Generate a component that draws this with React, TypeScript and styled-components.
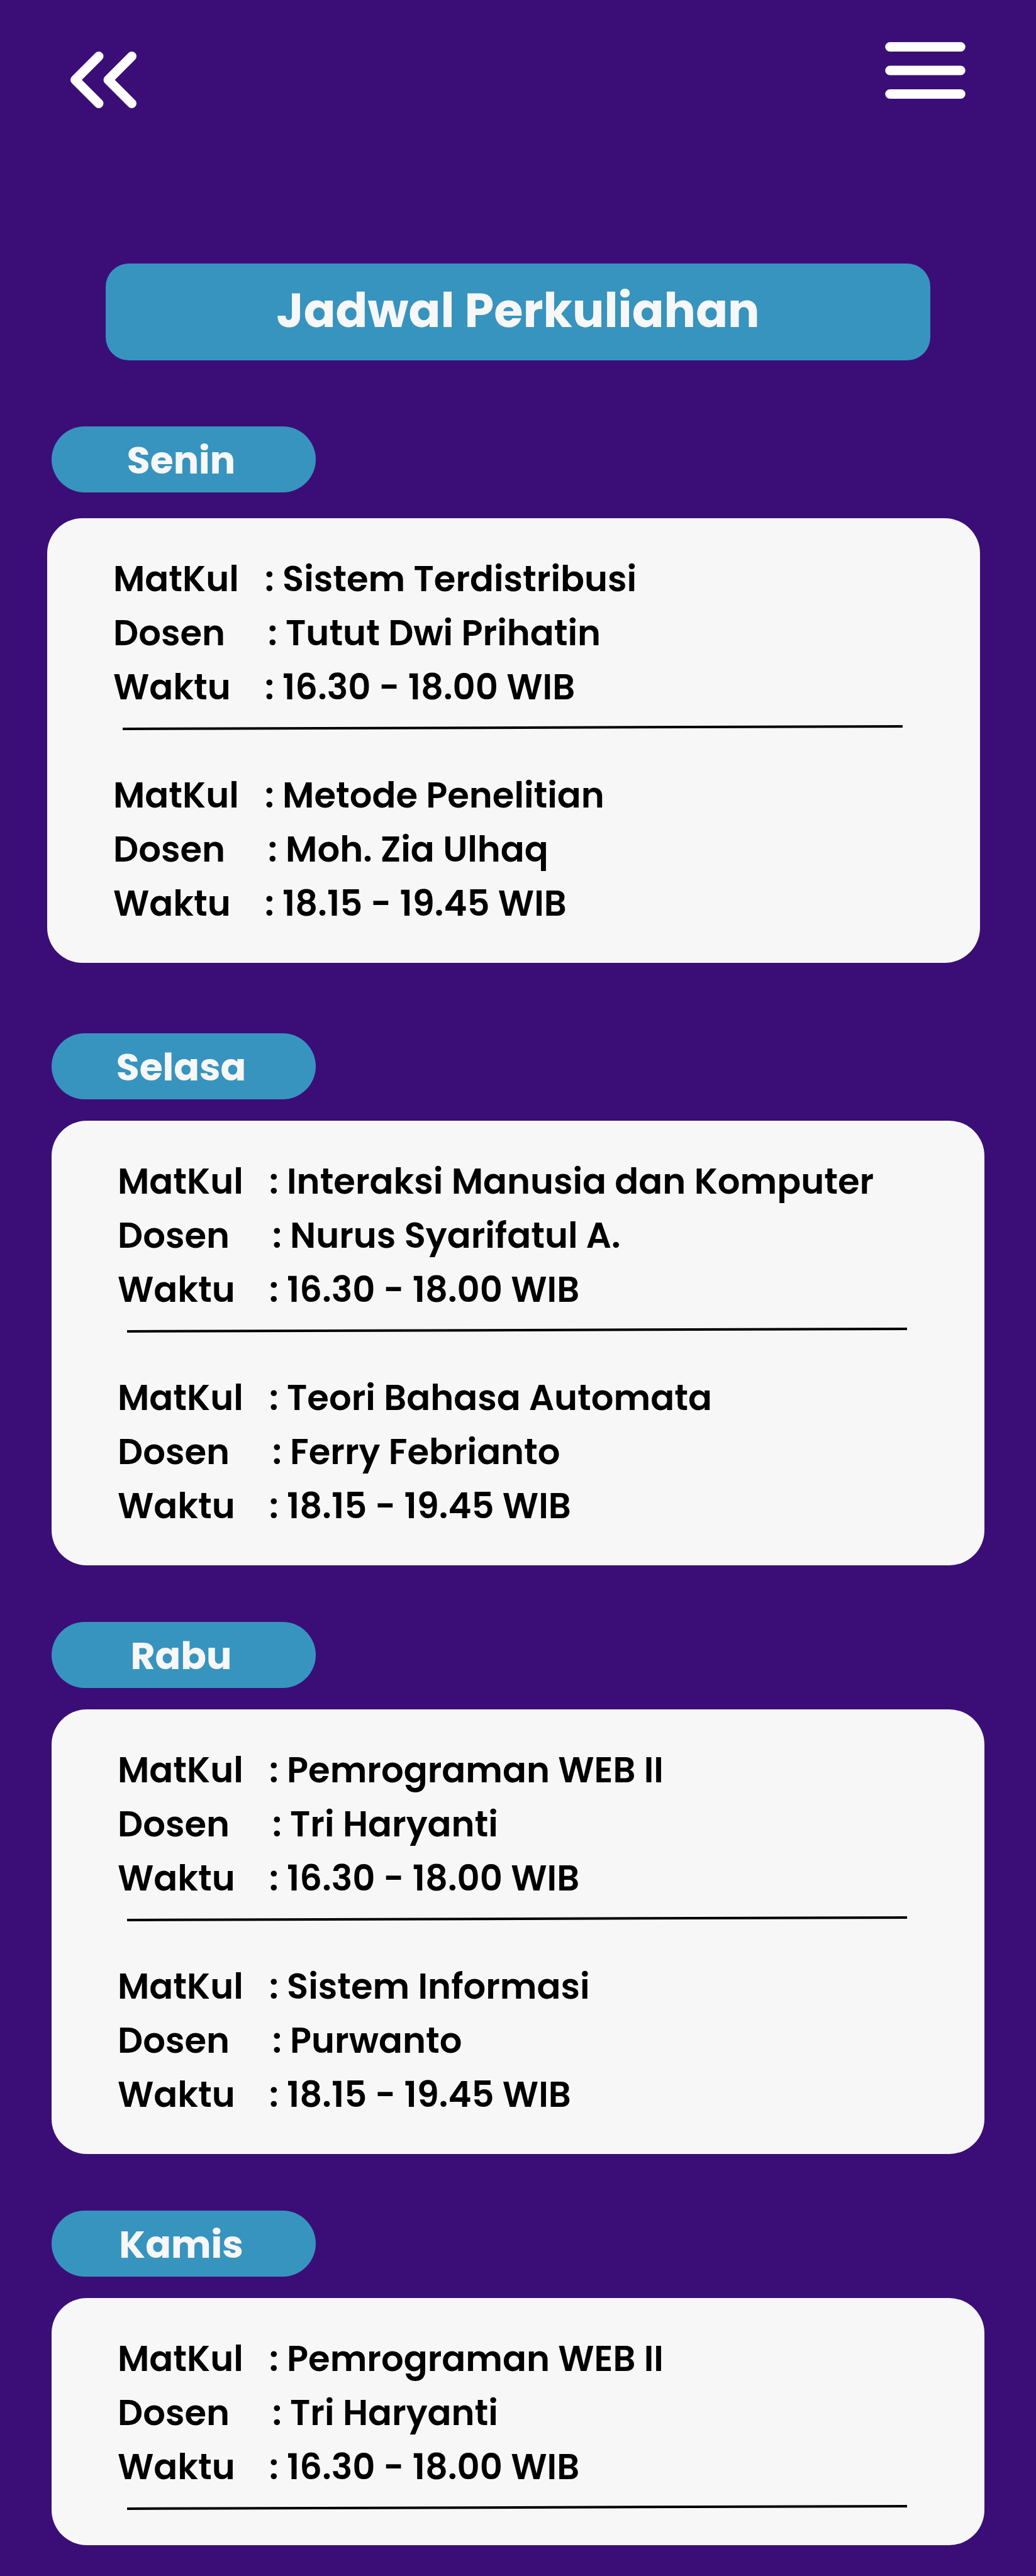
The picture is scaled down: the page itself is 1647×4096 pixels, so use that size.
import React from "react";
import styled, { createGlobalStyle } from "styled-components";

const GlobalStyle = createGlobalStyle`
  * { box-sizing: border-box; }
  body {
    margin: 0;
    background: #3b0e77;
    font-family: Poppins, Inter, "Open Sans", sans-serif;
  }
`;

const Page = styled.div`
  min-height: 100vh;
  padding-bottom: 49px;
  background: #3b0e77;
`;

const Header = styled.header`
  display: flex;
  justify-content: space-between;
  align-items: flex-start;
  padding: 67px 112px 0;
`;

const IconButton = styled.button<{ $drop?: number }>`
  display: block;
  margin: ${(p) => p.$drop ?? 0}px 0 0;
  padding: 0;
  border: 0;
  background: none;
  color: #fff;
  cursor: pointer;

  svg { display: block; }
`;

const Title = styled.h1`
  display: flex;
  align-items: center;
  justify-content: center;
  height: 154px;
  margin: 247px 168px 105px;
  padding-bottom: 4px;
  border-radius: 37px;
  background: #3794be;
  color: #f7f7f7;
  font-size: 75px;
  font-weight: 700;
  line-height: 90px;
`;

const Days = styled.main`
  display: flex;
  flex-direction: column;
  gap: 90px;
  padding: 0 82px;
`;

const Day = styled.section<{ $lead?: boolean }>`
  display: flex;
  flex-direction: column;
  align-items: flex-start;
  gap: ${(p) => (p.$lead ? 41 : 34)}px;
  margin-bottom: ${(p) => (p.$lead ? 22 : 0)}px;
`;

const DayName = styled.h2`
  display: flex;
  align-items: center;
  justify-content: center;
  width: 420px;
  height: 105px;
  margin: 0;
  padding-right: 8px;
  padding-top: 2px;
  border-radius: 53px;
  background: #3794be;
  color: #f7f7f7;
  font-size: 60px;
  font-weight: 700;
  line-height: 86px;
`;

const Card = styled.div<{ $lead?: boolean }>`
  align-self: stretch;
  min-height: 393px;
  margin: ${(p) => (p.$lead ? "0 7px 0 -7px" : "0")};
  padding: 54px 105px 51px;
  border-radius: 56px;
  background: #f7f7f7;
  color: #000;
`;

const Course = styled.dl`
  margin: 0;

  svg + & { margin-top: 61px; }
`;

const Row = styled.div`
  display: flex;
  font-size: 56px;
  font-weight: 600;
  line-height: 86px;
  white-space: nowrap;
`;

const Label = styled.dt<{ $wide?: boolean }>`
  flex: none;
  width: ${(p) => (p.$wide ? 246 : 241)}px;
`;

const Value = styled.dd`
  margin: 0;
`;

const Rule = styled.svg`
  display: block;
  width: calc(100% - 33px);
  height: 8px;
  margin: 17px 0 0 15px;
`;

type CourseInfo = { matkul: string; dosen: string; waktu: string };

const schedule: { day: string; courses: CourseInfo[] }[] = [
  {
    day: "Senin",
    courses: [
      { matkul: "Sistem Terdistribusi", dosen: "Tutut Dwi Prihatin", waktu: "16.30 - 18.00 WIB" },
      { matkul: "Metode Penelitian", dosen: "Moh. Zia Ulhaq", waktu: "18.15 - 19.45 WIB" },
    ],
  },
  {
    day: "Selasa",
    courses: [
      { matkul: "Interaksi Manusia dan Komputer", dosen: "Nurus Syarifatul A.", waktu: "16.30 - 18.00 WIB" },
      { matkul: "Teori Bahasa Automata", dosen: "Ferry Febrianto", waktu: "18.15 - 19.45 WIB" },
    ],
  },
  {
    day: "Rabu",
    courses: [
      { matkul: "Pemrograman WEB II", dosen: "Tri Haryanti", waktu: "16.30 - 18.00 WIB" },
      { matkul: "Sistem Informasi", dosen: "Purwanto", waktu: "18.15 - 19.45 WIB" },
    ],
  },
  {
    day: "Kamis",
    courses: [{ matkul: "Pemrograman WEB II", dosen: "Tri Haryanti", waktu: "16.30 - 18.00 WIB" }],
  },
];

function Field({ label, value, wide }: { label: string; value: string; wide?: boolean }) {
  return (
    <Row>
      <Label $wide={wide}>{label}</Label>
      <Value>{`: ${value}`}</Value>
    </Row>
  );
}

function CourseBlock({ course }: { course: CourseInfo }) {
  return (
    <Course>
      <Field label="MatKul" value={course.matkul} />
      <Field label="Dosen" value={course.dosen} wide />
      <Field label="Waktu" value={course.waktu} />
    </Course>
  );
}

export default function App() {
  return (
    <Page>
      <GlobalStyle />
      <Header>
        <IconButton $drop={15} aria-label="Kembali">
          <svg width="105" height="90" viewBox="0 0 112 96" fill="none" stroke="currentColor" strokeWidth="16" strokeLinecap="round" strokeLinejoin="round">
            <path d="M48 8L8 48L48 88M104 8L64 48L104 88" />
          </svg>
        </IconButton>
        <IconButton aria-label="Menu">
          <svg width="128" height="90" viewBox="0 0 136 96" fill="none" stroke="currentColor" strokeWidth="16" strokeLinecap="round">
            <path d="M8 8H128M8 48H128M8 88H128" />
          </svg>
        </IconButton>
      </Header>
      <Title>Jadwal Perkuliahan</Title>
      <Days>
        {schedule.map(({ day, courses }, i) => (
          <Day key={day} $lead={i === 0}>
            <DayName>{day}</DayName>
            <Card $lead={i === 0}>
              <CourseBlock course={courses[0]} />
              <Rule viewBox="0 0 1239 8" preserveAspectRatio="none" aria-hidden="true">
                <path d="M0 6L1239 2" stroke="#000" strokeWidth="4" />
              </Rule>
              {courses[1] && <CourseBlock course={courses[1]} />}
            </Card>
          </Day>
        ))}
      </Days>
    </Page>
  );
}
